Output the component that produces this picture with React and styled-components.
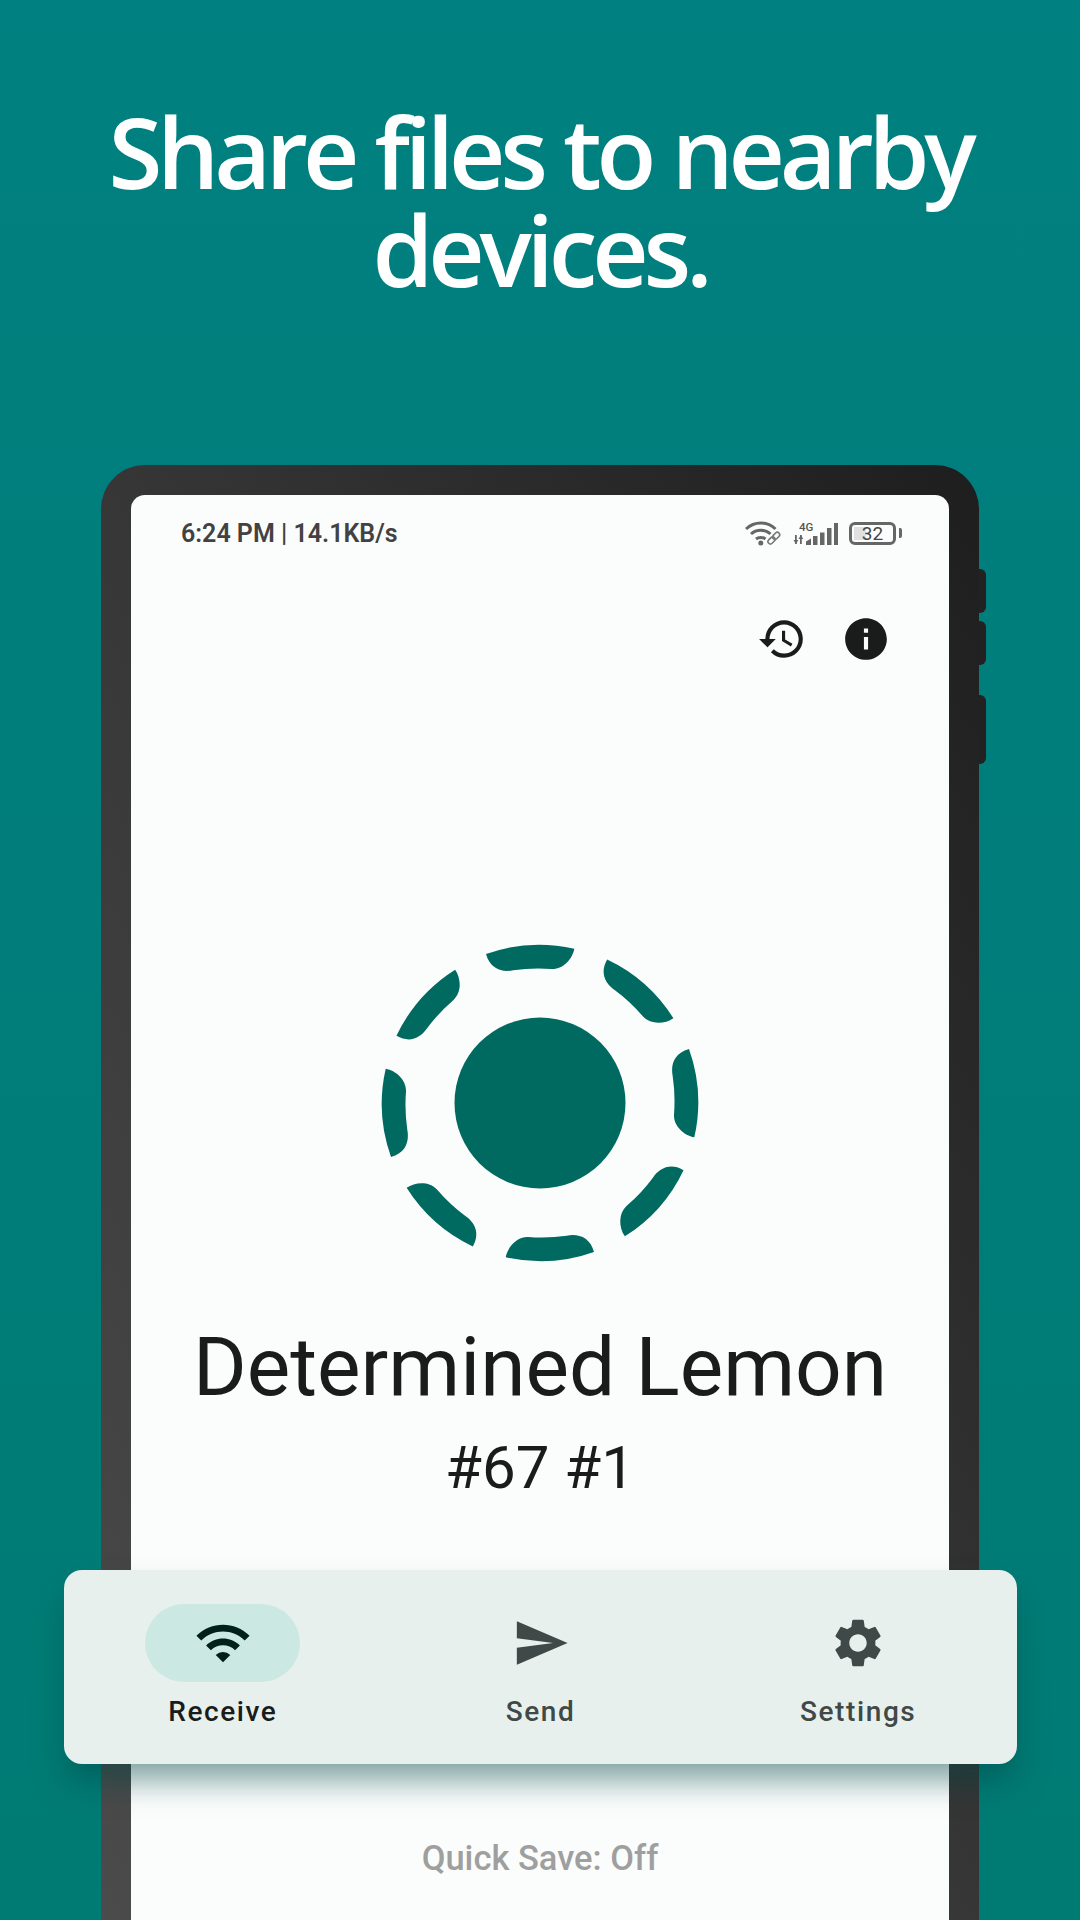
import React from 'react'
import styled, { createGlobalStyle } from 'styled-components'
import { MdHistory, MdInfo, MdWifi, MdSend, MdSettings } from 'react-icons/md'

const GlobalStyle = createGlobalStyle`
    html, body {
        margin: 0;
        padding: 0;
    }
    body {
        font-family: Roboto, "Liberation Sans", sans-serif;
    }
`

const Page = styled.div`
    width: 1080px;
    height: 1920px;
    overflow: hidden;
    display: flex;
    flex-direction: column;
    align-items: center;
    background: linear-gradient(180deg, #008080 0%, #007b74 100%);
`

const Heading = styled.h1`
    box-sizing: border-box;
    height: 465px;
    margin: 0;
    padding-top: 102px;
    font-family: "Open Sans", "Noto Sans", sans-serif;
    font-size: 98px;
    line-height: 98px;
    font-weight: 600;
    letter-spacing: -5.2px;
    color: #fff;
    text-align: center;
`

const Frame = styled.div`
    position: relative;
    box-sizing: border-box;
    flex: 1;
    width: 878px;
    display: flex;
    padding: 30px 30px 0;
    border-radius: 44px 44px 0 0;
    background: linear-gradient(to bottom left, #1e1e1e 0%, #343434 45%, #4b4b4b 100%);
`

const SideKey = styled.div`
    position: absolute;
    right: -7px;
    top: ${p => p.$top}px;
    width: 7px;
    height: ${p => p.$h}px;
    border-radius: 0 6px 6px 0;
    background: #222;
`

const Screen = styled.div`
    flex: 1;
    display: flex;
    flex-direction: column;
    align-items: center;
    border-radius: 14px 14px 0 0;
    background: #fbfdfc;
`

const StatusBar = styled.div`
    box-sizing: border-box;
    width: 100%;
    height: 76px;
    padding: 0 48px 0 50px;
    display: flex;
    align-items: center;
    justify-content: space-between;
`

const Clock = styled.span`
    font-size: 25px;
    font-weight: 600;
    color: #424242;
`

const StatusIcons = styled.div`
    display: flex;
    align-items: center;
    gap: 10px;
`

const Battery = styled.div`
    position: relative;
    box-sizing: border-box;
    width: 47px;
    height: 23px;
    margin-right: 5px;
    padding: 2px;
    border: 3px solid #666;
    border-radius: 6px;
    &::after {
        content: '';
        position: absolute;
        right: -9px;
        top: 3px;
        width: 3px;
        height: 10px;
        border-radius: 0 2px 2px 0;
        background: #666;
    }
`

const BatteryFill = styled.div`
    height: 100%;
    background: #e0e0e0;
`

const BatteryLevel = styled.span`
    position: absolute;
    inset: 0;
    text-align: center;
    font-size: 19px;
    line-height: 17px;
    color: #444;
`

const ActionRow = styled.div`
    box-sizing: border-box;
    width: 100%;
    height: 136px;
    padding-right: 58px;
    display: flex;
    align-items: center;
    justify-content: flex-end;
    gap: 34px;
    color: #191c1b;
`

const Logo = styled.svg`
    width: 320px;
    height: 320px;
    margin-top: 236px;
    fill: #006a60;
`

const DeviceName = styled.div`
    margin-top: 56px;
    font-size: 82px;
    line-height: 96px;
    color: #191c1b;
`

const DeviceId = styled.div`
    margin-top: 19px;
    font-size: 60px;
    line-height: 68px;
    color: #191c1b;
`

const QuickSave = styled.div`
    margin-top: 336px;
    font-size: 34.5px;
    line-height: 40px;
    font-weight: 500;
    color: #9f9f9f;
`

const NavPanel = styled.nav`
    position: absolute;
    left: -37px;
    top: 1105px;
    width: 953px;
    height: 194px;
    display: flex;
    border-radius: 18px;
    background: #e7f0ec;
    box-shadow: 0 20px 32px -4px rgba(0, 70, 70, 0.5);
`

const NavItem = styled.div`
    flex: 1;
    display: flex;
    flex-direction: column;
    align-items: center;
    padding-top: 34px;
    color: ${p => (p.$active ? '#191c1b' : '#3f4947')};
`

const Pill = styled.div`
    width: 155px;
    height: 78px;
    display: flex;
    align-items: center;
    justify-content: center;
    border-radius: 39px;
    background: ${p => (p.$active ? '#cce8e2' : 'transparent')};
    color: ${p => (p.$active ? '#00201c' : 'inherit')};
`

const NavLabel = styled.span`
    margin-top: 12px;
    font-size: 28px;
    line-height: 36px;
    font-weight: 500;
    letter-spacing: 1.6px;
`

const segment = 'M-54 -149 A158.2 158.2 0 0 1 34.3 -154.3 C32.5 -144 23 -133.5 11.7 -134 Q-8 -135.5 -26.7 -132.7 C-38 -130.5 -50 -134 -54 -149 Z'

const WifiLink = () => (
    <svg width="38" height="26" viewBox="0 0 38 26" fill="none">
        <g stroke="#666" strokeWidth="3">
            <path d="M1 9 C9.500 1 22 1 30.500 9" />
            <path d="M6 14 C11.500 9 20 9 25.500 14" />
            <path d="M11 19 C13.500 17 18 17 20.500 19" />
        </g>
        <circle cx="15.800" cy="23" r="2.500" fill="#666" />
        <g stroke="#777" strokeWidth="1.600" transform="rotate(-45 29 18)">
            <rect x="21.500" y="15.600" width="8" height="4.800" rx="2.400" />
            <rect x="28" y="15.600" width="8" height="4.800" rx="2.400" />
        </g>
    </svg>
)

const Signal = () => (
    <svg width="46" height="26" viewBox="0 -2 46 26">
        <text x="6" y="9" fontFamily="Roboto, sans-serif" fontSize="11.500" fontWeight="500" fill="#555">4G</text>
        <g fill="#666">
            <rect x="2" y="13" width="1.800" height="9" />
            <rect x="7" y="13" width="1.800" height="9" />
            <path d="M0.500 18 h4.800 l-2.400 4z M5.500 17 h4.800 l-2.400 -4z" />
            <path d="M13 23 v-3.500 l5 -3 v6.500z" />
            <rect x="20" y="14" width="4.500" height="9" />
            <rect x="27" y="10.500" width="4.500" height="12.500" />
            <rect x="34" y="6" width="4.500" height="17" />
            <rect x="41" y="1" width="4" height="22" />
        </g>
    </svg>
)

const App = () => {
    const level = 32
    return (
        <>
            <GlobalStyle />
            <Page>
                <Heading>Share files to nearby<br />devices.</Heading>
                <Frame>
                    <SideKey $top={104} $h={44} />
                    <SideKey $top={156} $h={44} />
                    <SideKey $top={230} $h={69} />
                    <Screen>
                        <StatusBar>
                            <Clock>6:24 PM | 14.1KB/s</Clock>
                            <StatusIcons>
                                <WifiLink />
                                <Signal />
                                <Battery>
                                    <BatteryFill style={{ width: `${level}%` }} />
                                    <BatteryLevel>{level}</BatteryLevel>
                                </Battery>
                            </StatusIcons>
                        </StatusBar>
                        <ActionRow>
                            <MdHistory size={50} />
                            <MdInfo size={50} />
                        </ActionRow>
                        <Logo viewBox="-160 -160 320 320">
                            <circle r="85.500" />
                            {[0, 45, 90, 135, 180, 225, 270, 315].map(a => (
                                <path key={a} d={segment} transform={`rotate(${a})`} />
                            ))}
                        </Logo>
                        <DeviceName>Determined Lemon</DeviceName>
                        <DeviceId>#67 #1</DeviceId>
                        <QuickSave>Quick Save: Off</QuickSave>
                    </Screen>
                    <NavPanel>
                        <NavItem $active>
                            <Pill $active><MdWifi size={58} /></Pill>
                            <NavLabel>Receive</NavLabel>
                        </NavItem>
                        <NavItem>
                            <Pill><MdSend size={58} /></Pill>
                            <NavLabel>Send</NavLabel>
                        </NavItem>
                        <NavItem>
                            <Pill><MdSettings size={58} /></Pill>
                            <NavLabel>Settings</NavLabel>
                        </NavItem>
                    </NavPanel>
                </Frame>
            </Page>
        </>
    )
}

export default App
